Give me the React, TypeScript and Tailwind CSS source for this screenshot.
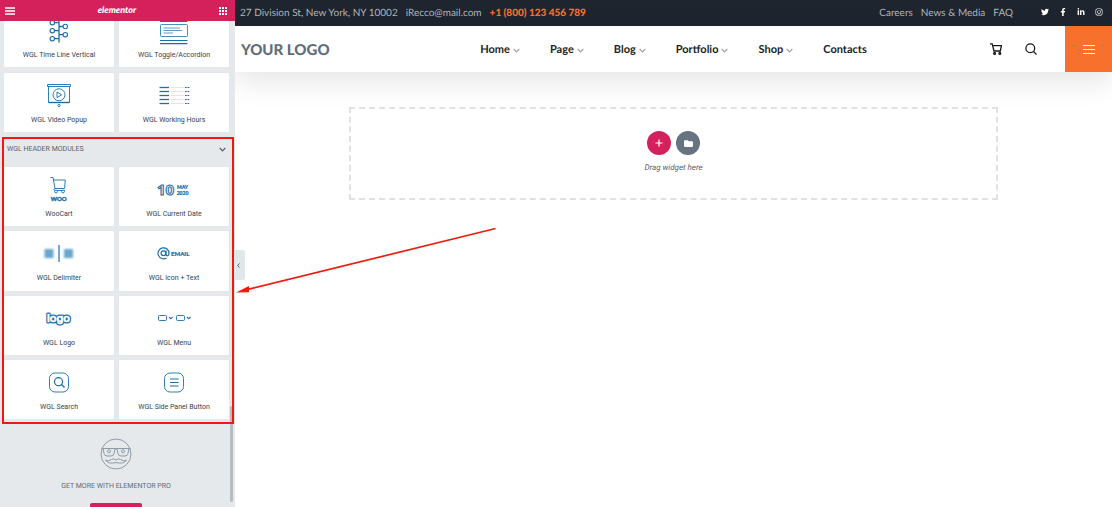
import React from "react";
import { FaTwitter, FaFacebookF, FaLinkedinIn, FaInstagram, FaFolder } from "react-icons/fa";

const BLUE = "#1b70a8";

function Glyph({ children }: { children: React.ReactNode }) {
  return (
    <svg
      viewBox="0 0 36 28"
      className="h-7 w-9 shrink-0 overflow-visible"
      fill="none"
      stroke={BLUE}
      strokeWidth="1.1"
      aria-hidden="true"
    >
      {children}
    </svg>
  );
}

const timeline = (
  <Glyph>
    <path d="M18 0V26.500M13.500 6.700H18M13.500 14.700H18M13.500 22.700H18M18 10.500H22M18 18.700H22" strokeWidth="1.300" />
    <circle cx="11.300" cy="6.700" r="2.200" />
    <circle cx="11.300" cy="14.700" r="2.200" />
    <circle cx="11.300" cy="22.700" r="2.200" />
    <circle cx="24.300" cy="10.500" r="2.200" />
    <circle cx="24.300" cy="18.700" r="2.200" />
  </Glyph>
);

const toggle = (
  <Glyph>
    <path d="M4 5.300H31.500M4 24.500H31.500M4 27.700H31.500" strokeWidth="1.200" />
    <rect x="4.500" y="8.500" width="27" height="12" rx="1" strokeWidth=".8" />
    <path d="M7.500 12H24M7.500 14.500H26M7.500 17H17" strokeWidth=".7" />
  </Glyph>
);

const video = (
  <Glyph>
    <path d="M6.500 3.500H29.500V5.500H6.500ZM7.500 5.500V21.500H28.500V5.500" strokeWidth=".9" />
    <path d="M7.500 21.500H28.500" strokeWidth="1.400" />
    <circle cx="18" cy="13.800" r="6" strokeWidth=".9" />
    <path d="M16 11V16.600L20.600 13.800Z" strokeWidth=".9" />
    <circle cx="18" cy="24.500" r="1.200" strokeWidth=".9" />
  </Glyph>
);

const hours = (
  <Glyph>
    {[6.5, 10.5, 14.5, 18.5, 22.5].map((y) => (
      <g key={y}>
        <path d={`M3.500 ${y}H13`} strokeWidth="1.300" />
        <path d={`M14.500 ${y}H28`} stroke="#cfe2ee" strokeWidth=".8" />
        <path d={`M29 ${y}H33.500`} strokeWidth="1.200" strokeDasharray="1.8 .7" />
      </g>
    ))}
  </Glyph>
);

const cart = (
  <Glyph>
    <path d="M9.500 2.500H12L14 13.500H23.500L24.300 5H12.500M14 13.500C12 14 12.500 15.500 14 15.500H24" strokeWidth=".9" />
    <circle cx="15" cy="16.500" r="1.400" fill="white" strokeWidth=".9" />
    <circle cx="22" cy="16.500" r="1.400" fill="white" strokeWidth=".9" />
    <text x="17.700" y="26" textAnchor="middle" fill={BLUE} strokeWidth=".4" className="font-['Lato'] text-[6px] font-black">
      WOO
    </text>
  </Glyph>
);

const date = (
  <Glyph>
    <text x="9.500" y="20" textAnchor="middle" fill="white" strokeWidth="1.100" className="font-['Open_Sans'] text-[15px] font-bold">
      10
    </text>
    <text x="26.500" y="13.500" textAnchor="middle" fill={BLUE} strokeWidth=".2" className="font-['Lato'] text-[5px] font-black">
      MAY
    </text>
    <text x="26.500" y="19.500" textAnchor="middle" fill={BLUE} strokeWidth=".2" className="font-['Lato'] text-[5px] font-black">
      2020
    </text>
  </Glyph>
);

const delimiter = (
  <Glyph>
    <g fill="#6aa6cb" stroke="none" className="blur-[1px]">
      <rect x="3.500" y="10" width="9" height="9" />
      <rect x="23" y="10" width="9" height="9" />
    </g>
    <path d="M18 6V23" strokeWidth="1.200" />
  </Glyph>
);

const email = (
  <Glyph>
    <circle cx="7.500" cy="14.300" r="2.400" strokeWidth="1.200" />
    <path d="M10 11.500V15.500C10 17.500 13 17.300 13 14.300A5.500 5.500 0 1 0 10.500 18.900" strokeWidth="1.200" />
    <text x="15" y="16.700" fill={BLUE} strokeWidth=".2" className="font-['Lato'] text-[6px] font-black">
      EMAIL
    </text>
  </Glyph>
);

const logo = (
  <Glyph>
    <g strokeWidth="3.200" strokeLinejoin="round" className="font-['Inter'] text-[11px] font-medium">
      <text x="17.500" y="17.500" textAnchor="middle">
        logo
      </text>
      <text x="17.500" y="17.500" textAnchor="middle" fill="white" stroke="white" strokeWidth=".7" aria-hidden="true">
        logo
      </text>
    </g>
  </Glyph>
);

const menu = (
  <Glyph>
    <rect x="2.500" y="11.500" width="8" height="5" rx="1" strokeWidth=".9" />
    <rect x="20.500" y="11.500" width="8" height="5" rx="1" strokeWidth=".9" />
    <path d="M13 13L14.800 14.800L16.600 13M31 13L32.800 14.800L34.600 13" />
  </Glyph>
);

const search = (
  <Glyph>
    <rect x="8.500" y="5" width="19" height="19" rx="5.500" strokeWidth=".9" />
    <circle cx="17.500" cy="13.700" r="4" strokeWidth="1.200" />
    <path d="M20.400 16.600L23.500 19.600" strokeWidth="1.400" />
  </Glyph>
);

const sidePanel = (
  <Glyph>
    <rect x="8.500" y="5" width="19" height="19" rx="5.500" strokeWidth=".9" />
    <path d="M14 11H22.500M14 14.500H22.500M14 18H22.500" strokeWidth="1.200" />
  </Glyph>
);

function Widget({ icon, label }: { icon: React.ReactNode; label: string }) {
  return (
    <button
      type="button"
      className="flex min-h-[59px] flex-col items-center gap-[6px] rounded-[1px] bg-white pt-2 text-[7px] leading-[10px] text-[#36424d] shadow-[0_0_1px_rgba(0,0,0,0.06)]"
    >
      {icon}
      <span className="whitespace-nowrap">{label}</span>
    </button>
  );
}

function Chevron({ className }: { className: string }) {
  return (
    <svg viewBox="0 0 7 5" className={className} fill="none" stroke="currentColor" strokeWidth="1.200" aria-hidden="true">
      <path d="M.7 1L3.500 3.900L6.300 1" />
    </svg>
  );
}

function Sidebar() {
  return (
    <aside className="relative z-10 flex w-[235px] shrink-0 flex-col bg-[#e6e9ec] font-['Roboto',sans-serif] [text-rendering:geometricPrecision]">
      <header className="z-10 flex h-[21px] shrink-0 items-center justify-between bg-[#d5215b] px-[5px] pr-2 text-white">
        <button type="button" aria-label="Menu">
          <svg viewBox="0 0 10 8" className="h-2 w-[10px]" stroke="currentColor" strokeWidth="1.300">
            <path d="M0 1H10M0 4H10M0 7H10" />
          </svg>
        </button>
        <span className="pb-[2px] font-['Lato',cursive] text-[9px] leading-3 font-black italic">elementor</span>
        <button type="button" aria-label="Widgets">
          <svg viewBox="0 0 8 8" className="size-2" fill="currentColor">
            {[0, 3, 6].map((y) => [0, 3, 6].map((x) => <rect key={`${x}-${y}`} x={x} y={y} width="2" height="2" />))}
          </svg>
        </button>
      </header>

      <div className="-mt-[13px] grid shrink-0 grid-cols-2 gap-x-[5px] gap-y-[6px] pr-[6px] pl-1">
        <Widget icon={timeline} label="WGL Time Line Vertical" />
        <Widget icon={toggle} label="WGL Toggle/Accordion" />
        <Widget icon={video} label="WGL Video Popup" />
        <Widget icon={hours} label="WGL Working Hours" />
      </div>

      <section className="relative mt-[5px] shrink-0 pr-[6px] pb-[5px] pl-1">
        <button type="button" className="flex h-[30px] w-full items-center justify-between px-[3px] pb-[6px] text-[7px] leading-[10px] text-[#56616c]">
          <span>WGL HEADER MODULES</span>
          <Chevron className="h-[5px] w-[7px]" />
        </button>
        <div className="grid h-[252px] grid-cols-2 grid-rows-4 gap-[5px]">
          <Widget icon={cart} label="WooCart" />
          <Widget icon={date} label="WGL Current Date" />
          <Widget icon={delimiter} label="WGL Delimiter" />
          <Widget icon={email} label="WGL Icon + Text" />
          <Widget icon={logo} label="WGL Logo" />
          <Widget icon={menu} label="WGL Menu" />
          <Widget icon={search} label="WGL Search" />
          <Widget icon={sidePanel} label="WGL Side Panel Button" />
        </div>
        <div className="pointer-events-none absolute inset-y-0 right-px left-[2px] z-10 border-2 border-[#f7150f]" />
      </section>

      <section className="flex flex-col items-center pt-[14px] pr-[3px] text-[#5f6b78]">
        <svg viewBox="0 0 32 32" className="size-8" fill="none" stroke="#8f9ba7" strokeWidth="1" aria-hidden="true">
          <circle cx="16" cy="16" r="15" />
          <path d="M1.500 10.500H30.500M3 10.500L4 15.500Q4.500 18 7 18H11Q13.500 18 14 15.500L14.800 11.500Q16 10.500 17.200 11.500L18 15.500Q18.500 18 21 18H25Q27.500 18 28 15.500L29 10.500" />
          <circle cx="9" cy="13.300" r="1.500" />
          <circle cx="23" cy="13.300" r="1.500" />
          <path d="M16 22Q13.500 20 11.500 21.500Q9 23.500 5.500 22.300Q8.500 26.500 16 24.500Q23.500 26.500 26.500 22.300Q23 23.500 20.500 21.500Q18.500 20 16 22Z" />
        </svg>
        <h2 className="mt-[11px] text-[7px] leading-[10px]">GET MORE WITH ELEMENTOR PRO</h2>
        <button type="button" aria-label="Go Pro" className="mt-3 h-4 w-[52px] rounded-[2px] bg-[#d5215b]" />
      </section>

      <div className="absolute right-[2px] bottom-[5px] h-24 w-[3px] rounded-full bg-[#b9bcbf]" />
      <button
        type="button"
        aria-label="Hide panel"
        className="absolute top-[250px] left-full flex h-[30px] w-[10px] items-center justify-center rounded-r-[2px] bg-[#e3e7ea] pr-[3px] text-[#56616b]"
      >
        <svg viewBox="0 0 3 5" className="h-[5px] w-[3px]" fill="none" stroke="currentColor">
          <path d="M2.500 .5L.7 2.500L2.500 4.500" />
        </svg>
      </button>
    </aside>
  );
}

const navItems = [
  { label: "Home", sub: true },
  { label: "Page", sub: true },
  { label: "Blog", sub: true },
  { label: "Portfolio", sub: true },
  { label: "Shop", sub: true },
  { label: "Contacts", sub: false },
];

const socials = [
  { label: "Twitter", Icon: FaTwitter },
  { label: "Facebook", Icon: FaFacebookF },
  { label: "LinkedIn", Icon: FaLinkedinIn },
  { label: "Instagram", Icon: FaInstagram },
];

export default function App() {
  return (
    <div className="flex h-screen overflow-hidden bg-white">
      <Sidebar />
      <main className="relative min-w-0 flex-1 font-['Lato',sans-serif] [text-rendering:geometricPrecision]">
        <div className="flex h-[26px] items-center justify-between bg-[#1e252e] pr-[9px] pl-[5px] text-[10px] leading-3 whitespace-nowrap text-[#aeb3b9]">
          <div className="flex gap-2">
            <span>27 Division St, New York, NY 10002</span>
            <a href="#mail">iRecco@mail.com</a>
            <a href="#phone" className="font-black text-[#f9702b]">+1 (800) 123 456 789</a>
          </div>
          <div className="flex items-center">
            <nav className="flex gap-2">
              <a href="#careers">Careers</a>
              <a href="#news">News &amp; Media</a>
              <a href="#faq">FAQ</a>
            </nav>
            <div className="ml-7 flex gap-[10px] pb-[2px] text-white">
              {socials.map(({ label, Icon }) => (
                <a key={label} href={`#${label}`} aria-label={label}>
                  <Icon className="size-2" />
                </a>
              ))}
            </div>
          </div>
        </div>

        <header className="grid h-[46px] grid-cols-[1fr_auto_1fr] items-center bg-white shadow-[0_9px_30px_rgba(0,0,0,0.11)]">
          <a href="#home" className="pt-[2px] pl-[6px] text-[15px] leading-5 font-black text-[#626e7a]">YOUR LOGO</a>
          <nav className="flex gap-[30px] pt-[2px] text-[11px] leading-3 font-bold text-[#1b1f24]">
            {navItems.map(({ label, sub }) => (
              <a key={label} href={`#${label}`} className="flex items-center gap-[3px]">
                {label}
                {sub && <Chevron className="h-[5px] w-[7px] text-[#a0a3a7]" />}
              </a>
            ))}
          </nav>
          <div className="flex h-full items-center justify-end text-[#17191c]">
            <button type="button" aria-label="Cart" className="mr-[23px]">
              <svg viewBox="0 0 12 12" className="size-3" fill="none" stroke="currentColor" strokeWidth="1.300">
                <path d="M0 .9H2.200L4 8H10.300L11.400 2.700H2.700" />
                <circle cx="4.600" cy="10.400" r=".9" />
                <circle cx="9.800" cy="10.400" r=".9" />
              </svg>
            </button>
            <button type="button" aria-label="Search" className="mr-7">
              <svg viewBox="0 0 12 12" className="size-3" fill="none" stroke="currentColor" strokeWidth="1.300">
                <circle cx="5.300" cy="5.300" r="4.400" />
                <path d="M8.500 8.500L11.500 11.500" />
              </svg>
            </button>
            <button type="button" aria-label="Side panel" className="flex h-full w-[47px] items-center justify-center bg-[#f7702c] text-white">
              <svg viewBox="0 0 12 11" className="h-[11px] w-3" stroke="currentColor" strokeWidth="1.200">
                <path d="M0 1.500H12M0 5.500H12M0 9.500H12" />
              </svg>
            </button>
          </div>
        </header>

        <div className="relative px-[114px] pt-[35px]">
          <section className="flex h-[93px] flex-col items-center border-2 border-dashed border-[#dfe2e5] pt-[22px]">
            <div className="flex gap-[5px] text-white">
              <button type="button" aria-label="Add section" className="flex size-6 items-center justify-center rounded-full bg-[#d5215b]">
                <svg viewBox="0 0 8 8" className="size-2" stroke="currentColor" strokeWidth="1.200">
                  <path d="M4 .5V7.500M.5 4H7.500" />
                </svg>
              </button>
              <button type="button" aria-label="Add template" className="flex size-6 items-center justify-center rounded-full bg-[#667380]">
                <FaFolder className="size-[9px]" />
              </button>
            </div>
            <p className="mt-2 font-['Roboto',sans-serif] text-[8px] leading-[10px] text-[#56616c] italic">Drag widget here</p>
          </section>
        </div>

        <svg viewBox="0 0 262 70" className="pointer-events-none absolute top-[226px] left-0 z-20 h-[70px] w-[262px]" aria-hidden="true">
          <path d="M12 63.700L260.500 2.500" stroke="#ee1c0c" strokeWidth="1.700" />
          <path d="M1 66.500L14 60V66.200Z" fill="#ee1c0c" />
        </svg>
      </main>
    </div>
  );
}
